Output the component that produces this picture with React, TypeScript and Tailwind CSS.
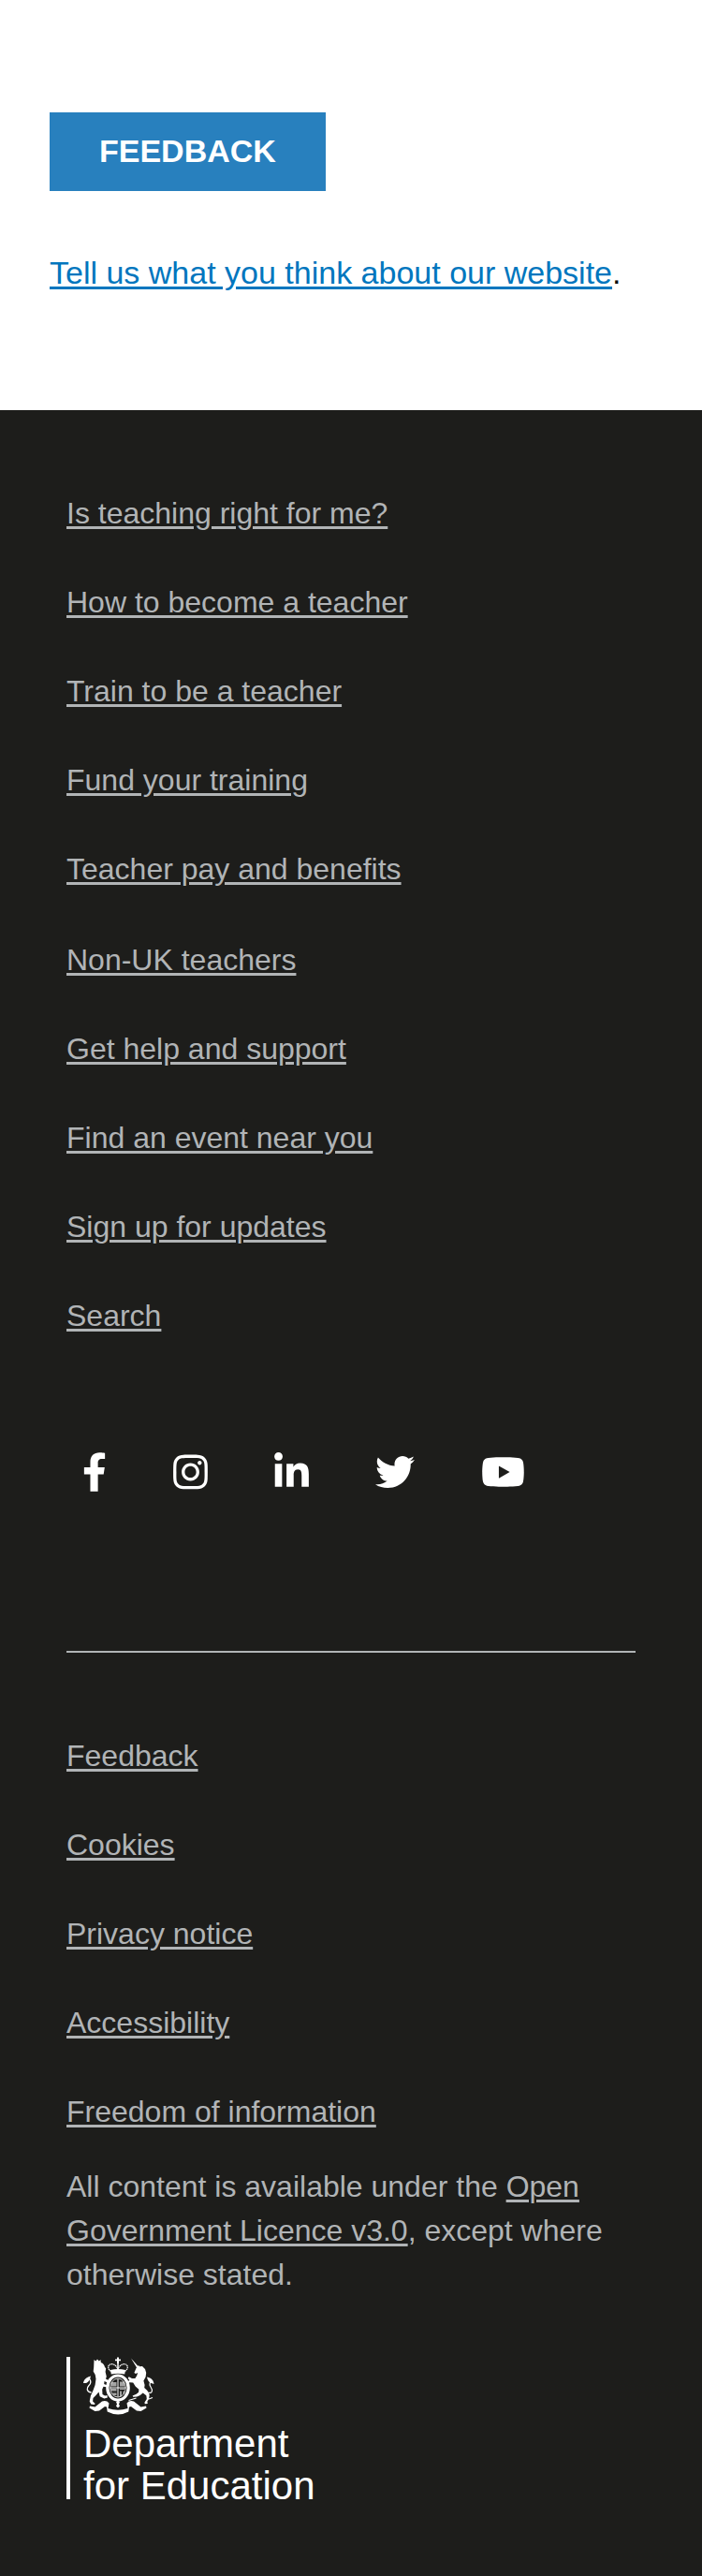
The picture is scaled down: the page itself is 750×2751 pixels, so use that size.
import { FaFacebookF, FaInstagram, FaLinkedinIn, FaTwitter, FaYoutube } from "react-icons/fa";

const explore = ["Is teaching right for me?", "How to become a teacher", "Train to be a teacher", "Fund your training", "Teacher pay and benefits"];
const support = ["Non-UK teachers", "Get help and support", "Find an event near you", "Sign up for updates", "Search"];
const legal = ["Feedback", "Cookies", "Privacy notice", "Accessibility", "Freedom of information"];

const social = [
  { name: "Facebook", Icon: FaFacebookF, size: "h-[42px] w-[26px]" },
  { name: "Instagram", Icon: FaInstagram, size: "h-[42px] w-[37px]" },
  { name: "LinkedIn", Icon: FaLinkedinIn, size: "h-[42px] w-[37px]" },
  { name: "Twitter", Icon: FaTwitter, size: "h-[42px] w-[42px]" },
  { name: "YouTube", Icon: FaYoutube, size: "h-[42px] w-[47px]" },
];

const underline = "underline decoration-[3px] underline-offset-[3px]";

function LinkList({ items }: { items: string[] }) {
  return (
    <ul className="flex flex-col gap-[47px]">
      {items.map((item) => (
        <li key={item}>
          <a href="#" className={underline}>{item}</a>
        </li>
      ))}
    </ul>
  );
}

function Crest() {
  return (
    <svg viewBox="0 0 76 64" className="h-16 w-[76px]" fill="currentColor" aria-hidden="true">
      {/* crown */}
      <path d="M36 0.500h2v2h2v1.800h-2V7h-2V4.300h-2V2.500h2z" />
      <path d="M29.500 15.500C24 11 27.500 6.500 32 8c2.500.8 4 3 5 5 1-2 2.500-4.200 5-5 4.500-1.500 8 3 2.500 7.500" fill="none" stroke="currentColor" strokeWidth="1.200" strokeDasharray="1.600 .5" />
      <path d="M37 7v8" stroke="currentColor" strokeWidth="1.500" />
      <path d="M29 14q8-2 16 0l-.8 4.500q-7.200-1.600-14.400 0z" />
      {/* garter and shield */}
      <ellipse cx="37" cy="33" rx="11.200" ry="13" fill="none" stroke="currentColor" strokeWidth="3.200" />
      <ellipse cx="37" cy="33" rx="8.200" ry="10" fill="none" stroke="currentColor" strokeWidth=".8" />
      <path d="M30 27h5.500v4.500H30zM39 26.500h5v5h-5zM29.500 34h6v2.500h-6zM39 34h5v1h-5zM31 38.500h4.500V41h-3zM39 36.500h2V42h-2zM42.500 36.500h1.500v3h-1.500z" opacity=".6" />
      <path d="M37 23.500v19M28.500 33h17" stroke="currentColor" strokeWidth="1" />
      {/* lion */}
      <path d="M11.500 3l1.800 1.600L15 2.500l1.800 2L18.500 3l.3 3c2.400.8 3.900 2.800 4.200 5l1.200 1.200-.6 3.800 1.200 5-.8 2.500 3.500 1.800.8 2-1.800.4-4-1.700-.3 3 3.600 1.600.3 2-4.600-.8-1.300 3 .3 5.200 2.600 1.500 2.400-.4.4 2.300-3.600 1-4.600-2.200-1.200-4.600-3 3.300-3 3.200-.4 3.500 2.600 2.300-1 1.200-3.400-.6-1.600-3 1.200-6 2.500-5.600 2.200-5.900.9-6.500-.8-4.500-2-3.500.5-4.500z" />
      <path d="M8.500 38C3 37 3.500 33 6 30.500c2-2 2.500-4.500.5-7" fill="none" stroke="currentColor" strokeWidth="1.300" />
      <path d="M0 28c.5-4 3.500-6.500 8-7.500-1 4-2.500 6.500-5 7.500z" />
      {/* unicorn */}
      <path d="M51 1.500L59.500 11l-1.800 1.500z" />
      <path d="M56.500 12l2.500-3 1.200 1.200 2.800-.2 3 3 1.200 4-.6 4.500-2.200 4 1.200 4.500-.4 3 3.200 3 2.300 4.500-.6 4.500-1.700 2.600.3 2.400-3 .2-.2-1.600 2.300-3.700-.5-3.600-3.600-2.700-3 2.500-3.300 1.300-4.200.4-.6-1.300 4-1.800 2.500-2 .3-3-3.700-3.300-2.500-3.800-3.500-.3-2.700 1-.6-1.600 3-1.700-1.700-2.300 1-1.500 3.300 1.700 3.400.2 1.800-3 1-3.200-2.200 1-1.600-1z" />
      <path d="M68.500 38c6 2 5.500-3 3.500-6-2-2.500-1-4.500.5-6.500" fill="none" stroke="currentColor" strokeWidth="1.200" />
      <path d="M68 21.500c4.500.5 7 3.500 7.500 7.500l-3-1c-2.500-1-3.800-3-4.500-6.500z" />
      <path d="M48.500 46.500l8-2.500M70 45l4-1.500" stroke="currentColor" strokeWidth="1.300" />
      {/* motto ribbon */}
      <path d="M7 52.500l5.500 1L20 47.500q5-1.500 7.500 2l-1 5.500q10.500 3.500 21 0l-1-5.500q2.500-3.500 7.500-2l7.500 6 5.500-1 .5 2-6 3.500-4.500-.5-6-4.500-2 .5-.7 5q-11 6-22.600 0l-.7-5-2-.5-6 4.500-4.500.5L6.500 54.500z" />
      <path d="M35 48l2-1.500 2 1.500-1 2.500 1 2-2 2-2-2 1-2z" />
    </svg>
  );
}

export default function App() {
  return (
    <div className="min-h-screen bg-white font-['Liberation_Sans',Arial,sans-serif]">
      <main className="px-[53px] pt-[120px] pb-[121px]">
        <h2 className="w-fit bg-[#2880be] px-[53px] pt-[17px] pb-[19px] text-[34px] leading-[48px] font-bold text-white">FEEDBACK</h2>
        <p className="mt-[62px] text-[34px] leading-[51px] text-[#0b0c0c]">
          <a href="#" className="text-[#0076be] underline decoration-[3px] underline-offset-[3px]">Tell us what you think about our website</a>.
        </p>
      </main>

      <footer className="bg-[#1d1d1b] px-[71px] pt-[86px] pb-[82px] text-[32px] leading-[48px] text-[#b1b4b6]">
        <nav aria-label="Footer" className="flex flex-col gap-[49px]">
          <LinkList items={explore} />
          <LinkList items={support} />
        </nav>

        <ul className="mt-[122px] flex gap-[71px] pl-[17px] text-white">
          {social.map(({ name, Icon, size }) => (
            <li key={name}>
              <a href="#" aria-label={name} className="block">
                <Icon className={size} />
              </a>
            </li>
          ))}
        </ul>

        <hr className="mt-[170px] mb-[86px] border-t-2 border-[#b1b4b6]" />

        <LinkList items={legal} />
        <p className="mt-[33px] leading-[47px]">
          All content is available under the <a href="#" className={underline}>Open Government Licence v3.0</a>, except where otherwise stated.
        </p>

        <div className="mt-16 flex w-fit border-l-4 border-white pl-[14px] text-white">
          <div>
            <Crest />
            <p className="mt-[6px] -mb-2 text-[42px] leading-[45px]">
              Department
              <br />
              for Education
            </p>
          </div>
        </div>
      </footer>
    </div>
  );
}
